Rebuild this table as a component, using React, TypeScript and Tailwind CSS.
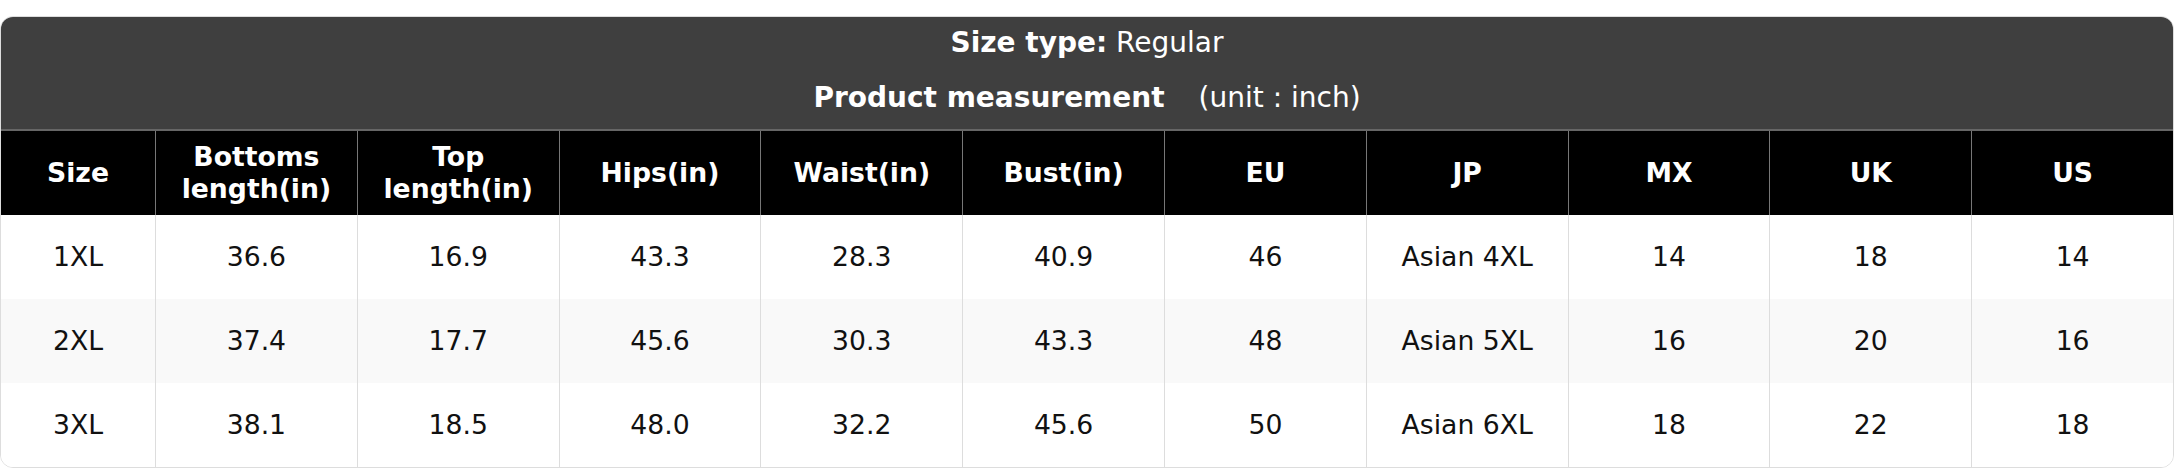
const columns = [
  'Size',
  'Bottoms length(in)',
  'Top length(in)',
  'Hips(in)',
  'Waist(in)',
  'Bust(in)',
  'EU',
  'JP',
  'MX',
  'UK',
  'US',
];

const rows = [
  ['1XL', '36.6', '16.9', '43.3', '28.3', '40.9', '46', 'Asian 4XL', '14', '18', '14'],
  ['2XL', '37.4', '17.7', '45.6', '30.3', '43.3', '48', 'Asian 5XL', '16', '20', '16'],
  ['3XL', '38.1', '18.5', '48.0', '32.2', '45.6', '50', 'Asian 6XL', '18', '22', '18'],
];

export default function App() {
  return (
    <div className="bg-white pt-4 font-['DejaVu_Sans',sans-serif] text-[26.67px]">
      <div className="overflow-hidden rounded-[13px] border border-[#dddddd]">
        {/* title block */}
        <div className="bg-[#3f3f3f] pt-[10px] pb-[15px] text-center text-[28px] text-white">
          <div className="h-8 leading-8">
            <span className="font-bold">Size type:</span> Regular
          </div>
          <div className="mt-[23px] h-8 leading-8">
            <span className="font-bold">Product measurement</span>
            <span className="ml-[34px]">(unit : inch)</span>
          </div>
        </div>

        <div className="grid grid-cols-[154px_repeat(10,minmax(0,1fr))] border-t-2 border-[#666666]">
          {columns.map((c, i) => (
            <div
              key={c}
              className={
                'flex h-[84px] items-center justify-center bg-black px-2 text-center font-bold leading-8 text-white ' +
                (i > 0 ? 'border-l border-[#777777]' : '')
              }
            >
              {c}
            </div>
          ))}

          {rows.map((r, ri) =>
            r.map((v, ci) => (
              <div
                key={ri + '-' + ci}
                className={
                  'flex h-[84px] items-center justify-center text-center leading-8 text-[#111111] ' +
                  (ri % 2 === 1 ? 'bg-[#f9f9f9] ' : 'bg-white ') +
                  (ci > 0 ? 'border-l border-[#dddddd]' : '')
                }
              >
                {v}
              </div>
            ))
          )}
        </div>
      </div>
    </div>
  );
}
